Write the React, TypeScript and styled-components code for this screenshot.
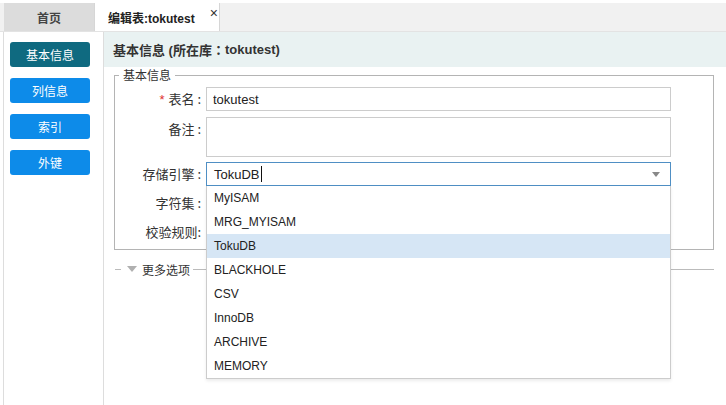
import { useState } from "react";
import styled, { createGlobalStyle } from "styled-components";

const GlobalStyle = createGlobalStyle`
    html, body {
        margin: 0;
        padding: 0;
        background: #ffffff;
        font-family: "Liberation Sans", "Noto Sans CJK SC", sans-serif;
        font-size: 12px;
        color: #333333;
    }
`;

const Page = styled.div`
    width: 726px;
    height: 405px;
    overflow: hidden;
    display: flex;
    flex-direction: column;
`;

const TabBar = styled.div`
    margin-top: 3px;
    height: 28px;
    display: flex;
    background: #f1f1f1;
    border-bottom: 1px solid #e3e3e3;
`;

const Tab = styled.div<{ $active?: boolean }>`
    display: flex;
    align-items: center;
    justify-content: ${(p) => (p.$active ? "flex-start" : "center")};
    width: ${(p) => (p.$active ? "125px" : "91px")};
    margin-left: ${(p) => (p.$active ? "0" : "4px")};
    padding-left: ${(p) => (p.$active ? "13px" : "0")};
    box-sizing: border-box;
    background: ${(p) => (p.$active ? "#ffffff" : "#dcdcdc")};
    border-right: 1px solid #d6d6d6;
    font-weight: bold;
    color: ${(p) => (p.$active ? "#222222" : "#444444")};
    font-size: 12px;
`;

const Close = styled.span`
    align-self: flex-start;
    margin-top: 2px;
    margin-left: 15px;
    font-weight: normal;
    font-size: 14px;
    color: #333333;
`;

const Main = styled.div`
    flex: 1;
    display: flex;
    min-height: 0;
`;

const Sidebar = styled.div`
    width: 101px;
    flex: none;
    margin-left: 3px;
    box-sizing: border-box;
    border-left: 1px solid #dddddd;
    border-right: 1px solid #dddddd;
    padding: 10px 0 0 6px;
    display: flex;
    flex-direction: column;
    gap: 11px;
`;

const SideButton = styled.button<{ $active?: boolean }>`
    width: 80px;
    height: 25px;
    border: none;
    border-radius: 3px;
    background: ${(p) => (p.$active ? "#0f6a80" : "#0d8be9")};
    color: #ffffff;
    font-family: "Noto Sans CJK SC", sans-serif;
    font-size: 12px;
    padding: 0;
    cursor: pointer;
`;

const Content = styled.div`
    flex: 1;
    min-width: 0;
    display: flex;
    flex-direction: column;
    align-items: flex-start;
`;

const Header = styled.div`
    align-self: stretch;
    height: 35px;
    display: flex;
    align-items: center;
    padding-left: 9px;
    background: #e9f2f2;
    font-size: 13px;
    font-weight: bold;
    color: #333333;
`;

const WideColon = styled.span`
    font-family: "Noto Sans CJK JP", sans-serif;
`;

const Fieldset = styled.fieldset`
    width: 600px;
    box-sizing: border-box;
    margin: 1px 0 0 10px;
    padding: 5px 0 5px 0;
    border: 1px solid #b4b4b4;
    display: flex;
    flex-direction: column;
    gap: 5px;
`;

const Legend = styled.legend`
    margin-left: 4px;
    padding: 0 4px;
    font-family: "Noto Sans CJK SC", sans-serif;
    font-size: 12px;
    line-height: 14px;
    color: #333333;
`;

const Row = styled.div`
    display: flex;
    align-items: flex-start;
`;

const Label = styled.label`
    width: 86px;
    margin-right: 5px;
    text-align: right;
    line-height: 24px;
    font-family: "Noto Sans CJK SC", sans-serif;
    font-size: 13px;
    color: #333333;
    white-space: pre;
`;

const Required = styled.span`
    color: #e03030;
    margin-right: 4px;
    font-family: "Liberation Sans", sans-serif;
`;

const TextInput = styled.input`
    width: 465px;
    height: 24px;
    box-sizing: border-box;
    border: 1px solid #cccccc;
    padding: 0 6px;
    font-family: "Liberation Sans", sans-serif;
    font-size: 13px;
    color: #222222;
    outline: none;
`;

const TextArea = styled.textarea`
    width: 465px;
    height: 40px;
    box-sizing: border-box;
    border: 1px solid #cccccc;
    padding: 4px 6px;
    resize: none;
    font-family: "Liberation Sans", sans-serif;
    font-size: 13px;
    outline: none;
`;

const SelectWrap = styled.div`
    position: relative;
    width: 465px;
`;

const SelectBox = styled.div`
    height: 24px;
    box-sizing: border-box;
    border: 1px solid #4f8fc4;
    padding: 0 7px;
    display: flex;
    align-items: center;
    font-family: "Liberation Sans", sans-serif;
    font-size: 13px;
    color: #222222;
    background: #ffffff;
`;

const Caret = styled.span`
    display: inline-block;
    width: 1px;
    height: 16px;
    margin-left: 1px;
    background: #111111;
`;

const Arrow = styled.span`
    margin-left: auto;
    margin-right: 3px;
    width: 0;
    height: 0;
    border-left: 4px solid transparent;
    border-right: 4px solid transparent;
    border-top: 5px solid #888888;
`;

const Dropdown = styled.ul`
    position: absolute;
    top: 24px;
    left: 0;
    right: 0;
    z-index: 10;
    margin: 0;
    padding: 0;
    list-style: none;
    background: #ffffff;
    border: 1px solid #cccccc;
    border-top: none;
    box-shadow: 0 2px 3px rgba(0, 0, 0, 0.08);
`;

const Option = styled.li<{ $selected?: boolean }>`
    height: 24px;
    line-height: 24px;
    padding-left: 7px;
    font-family: "Liberation Sans", sans-serif;
    font-size: 12px;
    color: #222222;
    background: ${(p) => (p.$selected ? "#d6e6f5" : "transparent")};
`;

const MoreRow = styled.div`
    width: 599px;
    margin: 12px 0 0 11px;
    display: flex;
    align-items: center;
    height: 14px;
`;

const Dash = styled.span<{ $grow?: boolean }>`
    height: 1px;
    background: #bbbbbb;
    width: 6px;
    flex: ${(p) => (p.$grow ? "1" : "none")};
`;

const Triangle = styled.span`
    margin: 0 5px 0 6px;
    width: 0;
    height: 0;
    border-left: 5px solid transparent;
    border-right: 5px solid transparent;
    border-top: 6px solid #b0b0b0;
`;

const MoreText = styled.span`
    font-family: "Noto Sans CJK SC", sans-serif;
    font-size: 12px;
    color: #333333;
    margin-right: 3px;
`;

const engines = ["MyISAM", "MRG_MYISAM", "TokuDB", "BLACKHOLE", "CSV", "InnoDB", "ARCHIVE", "MEMORY"];
const menus = ["基本信息", "列信息", "索引", "外键"];

const App = () => {
    const [engine, setEngine] = useState("TokuDB");
    const [activeMenu, setActiveMenu] = useState(0);

    return (
        <Page>
            <GlobalStyle />
            <TabBar>
                <Tab>首页</Tab>
                <Tab $active>
                    编辑表:tokutest
                    <Close>×</Close>
                </Tab>
            </TabBar>
            <Main>
                <Sidebar>
                    {menus.map((m, i) => (
                        <SideButton key={m} $active={i === activeMenu} onClick={() => setActiveMenu(i)}>
                            {m}
                        </SideButton>
                    ))}
                </Sidebar>
                <Content>
                    <Header>
                        基本信息 (所在库<WideColon>：</WideColon>tokutest)
                    </Header>
                    <Fieldset>
                        <Legend>基本信息</Legend>
                        <Row>
                            <Label>
                                <Required>*</Required>表名 :
                            </Label>
                            <TextInput defaultValue="tokutest" />
                        </Row>
                        <Row>
                            <Label>备注 :</Label>
                            <TextArea />
                        </Row>
                        <Row>
                            <Label>存储引擎 :</Label>
                            <SelectWrap>
                                <SelectBox>
                                    {engine}
                                    <Caret />
                                    <Arrow />
                                </SelectBox>
                                <Dropdown>
                                    {engines.map((e) => (
                                        <Option key={e} $selected={e === engine} onClick={() => setEngine(e)}>
                                            {e}
                                        </Option>
                                    ))}
                                </Dropdown>
                            </SelectWrap>
                        </Row>
                        <Row>
                            <Label>字符集 :</Label>
                            <TextInput />
                        </Row>
                        <Row>
                            <Label>校验规则:</Label>
                            <TextInput />
                        </Row>
                    </Fieldset>
                    <MoreRow>
                        <Dash />
                        <Triangle />
                        <MoreText>更多选项</MoreText>
                        <Dash $grow />
                    </MoreRow>
                </Content>
            </Main>
        </Page>
    );
};

export default App;
